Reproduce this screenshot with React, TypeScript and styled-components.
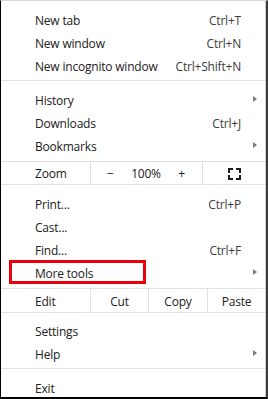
import React from "react";
import styled, { createGlobalStyle } from "styled-components";

const GlobalStyle = createGlobalStyle`
  html, body {
    margin: 0;
    padding: 0;
    background: #ffffff;
  }
  * {
    box-sizing: border-box;
  }
`;

const Frame = styled.div`
  width: 268px;
  height: 399px;
  border-top: 1px solid #d6d6d6;
  border-left: 1px solid #000000;
  border-bottom: 2px solid #000000;
  border-right: 2px solid #3a3a3a;
  overflow: hidden;
`;

const Menu = styled.div`
  height: 100%;
  border-right: 1px solid #cfcfcf;
  padding-top: 7px;
  font-family: "Open Sans", "Noto Sans", sans-serif;
  font-size: 12px;
  letter-spacing: -0.2px;
  color: #202020;
`;

const Row = styled.div`
  position: relative;
  height: 23px;
  display: flex;
  align-items: center;
  justify-content: space-between;
  padding: 2px 24px 0 34px;
`;

const Shortcut = styled.span`
  color: #3c3c3c;
`;

const Arrow = styled.span`
  position: absolute;
  right: 8px;
  top: 8px;
  width: 0;
  height: 0;
  border-top: 3.5px solid transparent;
  border-bottom: 3.5px solid transparent;
  border-left: 4px solid #7a7a7a;
`;

const Separator = styled.div`
  height: 1px;
  background: #e0e0e0;
  margin: 3px 0 7px;
`;

const SplitRow = styled.div<{ $h: number; $after: number }>`
  display: flex;
  height: ${(p) => p.$h}px;
  margin-top: 4px;
  margin-bottom: ${(p) => p.$after}px;
  border-top: 1px solid #e0e0e0;
  border-bottom: 1px solid #e0e0e0;
`;

const Cell = styled.div<{ $w?: number; $start?: boolean }>`
  display: flex;
  align-items: center;
  justify-content: ${(p) => (p.$start ? "flex-start" : "center")};
  padding-left: ${(p) => (p.$start ? "34px" : "0")};
  padding-top: 1px;
  ${(p) => (p.$w ? `width: ${p.$w}px; flex: none;` : "flex: 1;")}
  & + & {
    border-left: 1px solid #e0e0e0;
  }
`;

const ZoomControls = styled(Cell)`
  justify-content: space-between;
  padding: 1px 17px 0 16px;
`;

const Highlight = styled.div`
  position: absolute;
  left: 8px;
  top: -1px;
  width: 137px;
  height: 24px;
  border: 3px solid #e8000b;
`;

const FullscreenIcon = () => (
  <svg width="13" height="12" viewBox="0 0 13 12" fill="none">
    <path
      d="M1 4V1h3M9 1h3v3M12 8v3H9M4 11H1V8"
      stroke="#1e1e1e"
      strokeWidth="2"
      strokeLinecap="square"
    />
  </svg>
);

type Item = { label: string; shortcut?: string; sub?: boolean };

const MenuRow: React.FC<Item & { marked?: boolean }> = ({
  label,
  shortcut,
  sub,
  marked,
}) => (
  <Row>
    <span>{label}</span>
    {shortcut && <Shortcut>{shortcut}</Shortcut>}
    {sub && <Arrow />}
    {marked && <Highlight />}
  </Row>
);

const App: React.FC = () => {
  return (
    <>
      <GlobalStyle />
      <Frame>
        <Menu>
          <MenuRow label="New tab" shortcut="Ctrl+T" />
          <MenuRow label="New window" shortcut="Ctrl+N" />
          <MenuRow label="New incognito window" shortcut="Ctrl+Shift+N" />
          <Separator />
          <MenuRow label="History" sub />
          <MenuRow label="Downloads" shortcut="Ctrl+J" />
          <MenuRow label="Bookmarks" sub />
          <SplitRow $h={24} $after={7}>
            <Cell $w={89} $start>
              Zoom
            </Cell>
            <ZoomControls $w={112}>
              <span>−</span>
              <span>100%</span>
              <span>+</span>
            </ZoomControls>
            <Cell>
              <FullscreenIcon />
            </Cell>
          </SplitRow>
          <MenuRow label="Print..." shortcut="Ctrl+P" />
          <MenuRow label="Cast..." />
          <MenuRow label="Find..." shortcut="Ctrl+F" />
          <MenuRow label="More tools" sub marked />
          <SplitRow $h={25} $after={6}>
            <Cell $w={89} $start>
              Edit
            </Cell>
            <Cell $w={58}>Cut</Cell>
            <Cell $w={59}>Copy</Cell>
            <Cell>Paste</Cell>
          </SplitRow>
          <MenuRow label="Settings" />
          <MenuRow label="Help" sub />
          <Separator />
          <MenuRow label="Exit" />
        </Menu>
      </Frame>
    </>
  );
};

export default App;
